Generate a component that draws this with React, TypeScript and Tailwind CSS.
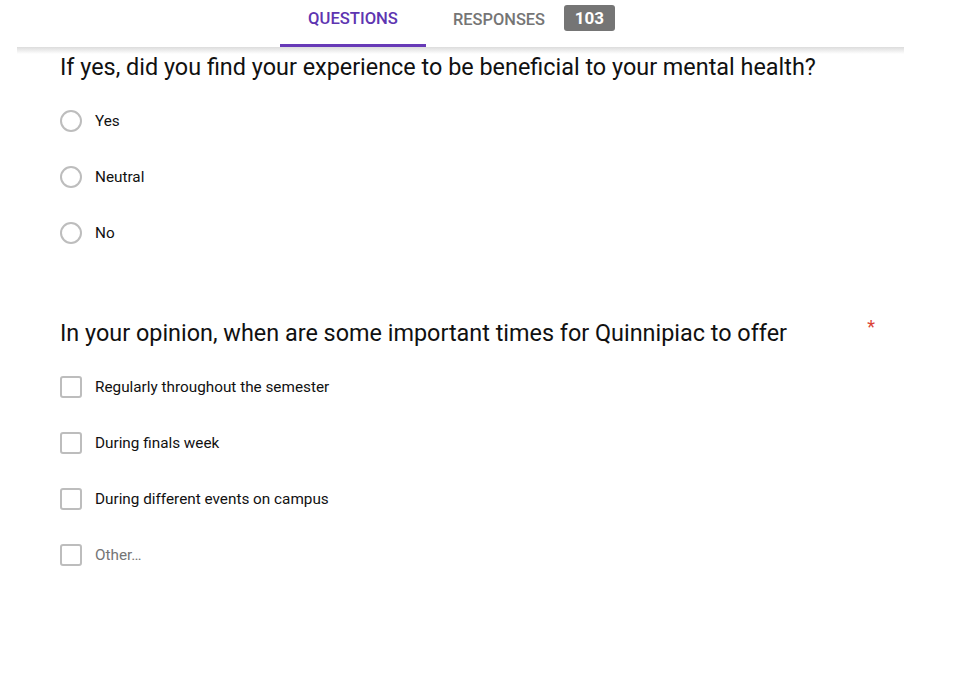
import React from "react";

function Radio({ label }: { label: string }) {
  return (
    <div className="flex items-center h-[56px]">
      <div className="w-[22px] h-[22px] rounded-full border-2 border-[#bdbdbd] ml-[60px]" />
      <span className="ml-[13px] text-[15.3px] text-[#111111]">{label}</span>
    </div>
  );
}

function Check({ label, muted }: { label: string; muted?: boolean }) {
  return (
    <div className="flex items-center h-[56px]">
      <div className="w-[22px] h-[22px] rounded-[3px] border-2 border-[#bdbdbd] ml-[60px]" />
      <span className={"ml-[13px] text-[15.3px] " + (muted ? "text-[#757575]" : "text-[#111111]")}>{label}</span>
    </div>
  );
}

export default function App() {
  return (
    <div className="w-[980px] h-[683px] bg-white overflow-hidden" style={{ fontFamily: "Roboto, Arial, sans-serif" }}>
      <div className="relative w-[887px] ml-[17px] h-[47px]">
        <div className="flex h-full">
          <div className="ml-[263px] w-[146px] h-full flex items-center justify-center border-b-[3px] border-[#673ab7] text-[#5e35b1] font-medium text-[16.6px] pb-[5px]">
            QUESTIONS
          </div>
          <div className="flex items-start pt-[5px] ml-[27px]">
            <span className="text-[#757575] font-medium text-[16.4px] mt-[3px]">RESPONSES</span>
            <span className="ml-[19px] h-[26px] w-[51px] rounded-[3px] bg-[#757575] text-white font-bold text-[17px] leading-none flex items-center justify-center">103</span>
          </div>
        </div>
        <div className="absolute left-0 right-0 top-[47px] h-[7px] bg-gradient-to-b from-[#dcdcdc] to-white" />
      </div>
      <div className="pt-[5px] relative">
        <div className="ml-[60px] text-[23.4px] text-[#111111] leading-[30px]">
          If yes, did you find your experience to be beneficial to your mental health?
        </div>
        <div className="mt-[11px]">
          <Radio label="Yes" />
          <Radio label="Neutral" />
          <Radio label="No" />
        </div>
        <div className="flex mt-[49px] w-[880px]">
          <div className="ml-[60px] text-[23.4px] text-[#111111] leading-[30px] mt-[8px]">
            In your opinion, when are some important times for Quinnipiac to offer
          </div>
          <div className="ml-auto mr-[5px] text-[#db4437] text-[18px] leading-[20px] mt-[7px]">*</div>
        </div>
        <div className="mt-[11px]">
          <Check label="Regularly throughout the semester" />
          <Check label="During finals week" />
          <Check label="During different events on campus" />
          <Check label="Other…" muted />
        </div>
      </div>
    </div>
  );
}
